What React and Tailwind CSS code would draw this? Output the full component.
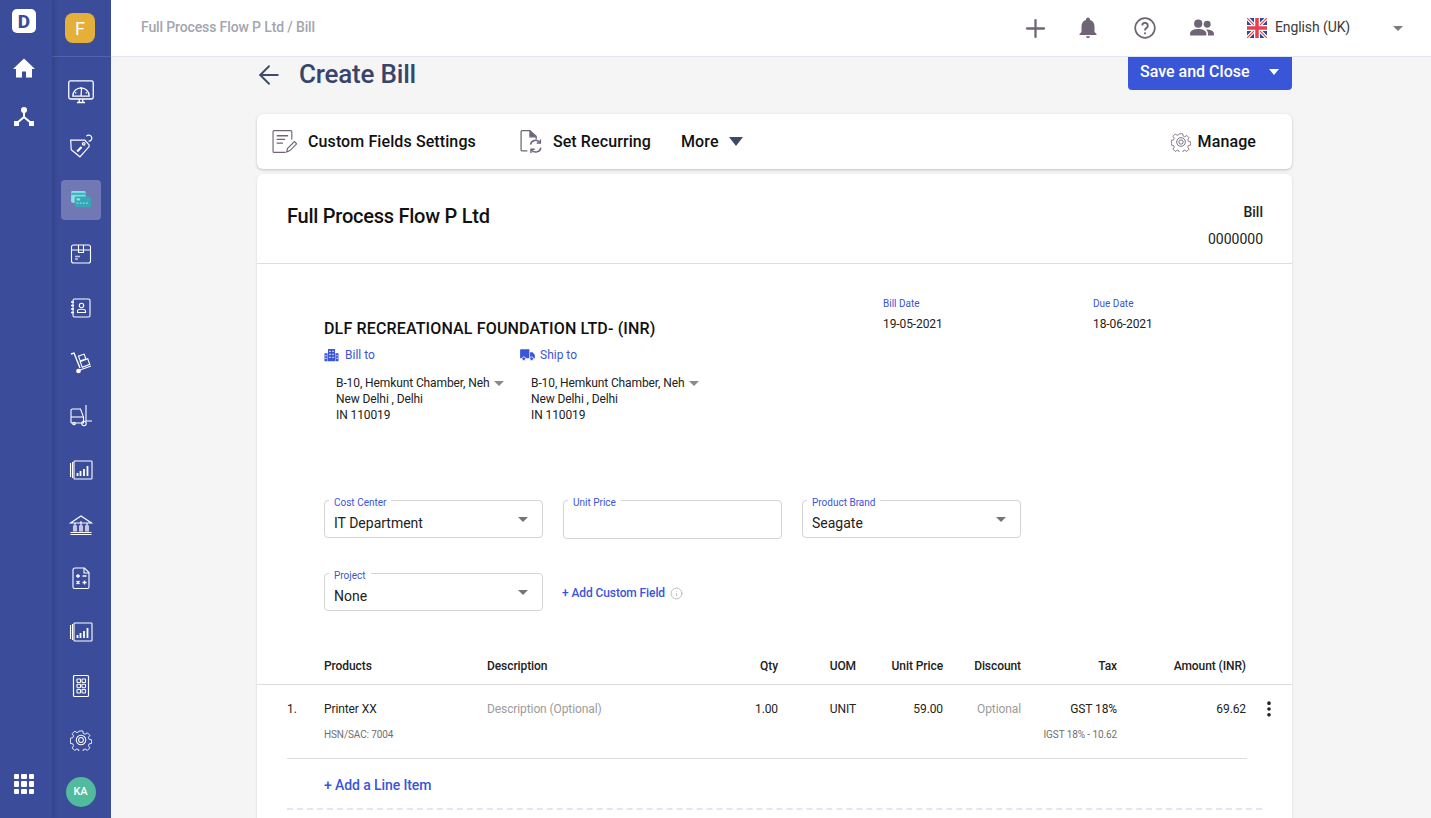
import React from "react";
import { Plus, ArrowLeft, MoreVertical, Info } from "lucide-react";

const Ic = ({ children, className = "", w = "1.100" }) => (
  <svg viewBox="0 0 24 24" fill="none" stroke="currentColor" strokeWidth={w} className={className}>{children}</svg>
);

function Gear({ className = "" }) {
  return (
    <svg viewBox="0 0 24 24" fill="none" stroke="currentColor" strokeWidth="1.100" className={className}>
      <path d="M9.800 1h4.400l.6 3.100 2.200.9 2.700-1.700 3 3-1.700 2.700.9 2.200 3 .6v4.300l-3 .6-.9 2.200 1.700 2.700-3 3-2.700-1.700-2.200.9-.6 3h-4.400l-.6-3-2.200-.9-2.700 1.700-3-3 1.700-2.700-.9-2.200-3-.6V9.800l3-.6.9-2.200-1.700-2.700 3-3 2.700 1.700 2.200-.9z" transform="translate(1.200 1.200) scale(.9)" />
      <circle cx="12" cy="12" r="5.200" />
      <circle cx="12" cy="12" r="2.600" />
    </svg>
  );
}

const Rail = {
  gauge: (
    <Ic className="w-[28px] h-[28px]">
      <rect x="1.500" y="2.500" width="21" height="15.500" rx="1.500" />
      <path d="M5 15.500a7 7 0 0 1 14 0zM12 15.500l.5-6.500M8.500 21h7M10.500 18v3M13.500 18v3" />
      <path d="M7 12.500l1 .5M17 12.500l-1 .5M12 8v1" />
    </Ic>
  ),
  tag: (
    <Ic className="w-[26px] h-[26px]">
      <path d="M2.500 6.500h13l4 4.500v1.500l-8.500 9.500-8-6.500z" />
      <path d="M19 7.500a2.800 2.800 0 1 0-2-4.500" />
      <circle cx="14.500" cy="10" r="1.200" />
      <path d="M8.500 17l4-4" strokeWidth="2" />
    </Ic>
  ),
  card: (
    <svg viewBox="0 0 22 20" style={{ width: 20, height: 18 }}>
      <rect x="0" y="0" width="16" height="13" rx="1.500" fill="#8fdfe4" />
      <rect x="0" y="2" width="16" height="2.500" fill="#3fb6c4" />
      <rect x="4" y="6" width="18" height="12" rx="1.500" fill="#36a7b6" />
      <rect x="6" y="8" width="4" height="2.500" fill="#8fdfe4" />
      <path d="M6 13.500h2M9.500 13.500h2M13 13.500h2M16.500 13.500h2" stroke="#8fdfe4" strokeWidth="1.500" />
    </svg>
  ),
  box: (
    <Ic className="w-[24px] h-[24px]">
      <rect x="2.500" y="3" width="19" height="18" rx="2" />
      <path d="M2.500 8h19M9.500 3v7.500h5V3" />
      <path d="M6 14.500h5M6 17h3" strokeWidth="1.400" opacity=".7" />
    </Ic>
  ),
  contacts: (
    <Ic className="w-[24px] h-[24px]">
      <rect x="4" y="3" width="17" height="18" rx="1.500" />
      <path d="M2 6h3M2 9.500h3M2 13h3M2 16.500h3" strokeWidth="1.500" />
      <circle cx="12.500" cy="9.500" r="2.200" />
      <path d="M8.500 16.500v-1.500c0-1 1.500-1.800 4-1.800s4 .8 4 1.800v1.500z" />
    </Ic>
  ),
  trolley: (
    <Ic className="w-[24px] h-[24px]">
      <path d="M2 4l3-1 6 15" strokeWidth="1.400" />
      <rect x="10" y="5" width="6" height="5" transform="rotate(-20 13 7)" />
      <rect x="12" y="10" width="8" height="6" transform="rotate(-20 16 13)" />
      <path d="M11 20l11-4" />
      <circle cx="9.500" cy="21" r="1.800" fill="currentColor" />
    </Ic>
  ),
  forklift: (
    <Ic className="w-[24px] h-[24px]">
      <path d="M2 19V6.500C2 5.500 2.500 5 3.500 5h8l3 8v6H2" />
      <path d="M17 1v16h6" />
      <path d="M2 13h12.500" />
      <circle cx="5" cy="19.500" r="1.300" />
      <circle cx="15" cy="19.500" r="2.200" />
    </Ic>
  ),
  bars: (
    <Ic className="w-[24px] h-[24px]">
      <rect x="5" y="3" width="18" height="18" rx=".8" />
      <path d="M1.500 5v14M3.500 4v16" />
      <path d="M8.500 18v-3M11.500 18v-5M15 18v-7M18.500 18V8" strokeWidth="1.800" />
    </Ic>
  ),
  bank: (
    <Ic className="w-[24px] h-[24px]">
      <path d="M1.500 11L12 4l10.500 7z" />
      <path d="M1.500 20.500h21M1.500 22.500h21" />
      <rect x="4.500" y="14" width="3" height="5" fill="currentColor" opacity=".7" />
      <rect x="10.500" y="14" width="3" height="5" fill="currentColor" opacity=".7" />
      <rect x="16.500" y="14" width="3" height="5" fill="currentColor" opacity=".7" />
      <path d="M6 11v3M12 9v5M18 11v3" />
    </Ic>
  ),
  calc: (
    <Ic className="w-[24px] h-[24px]">
      <path d="M4 4c0-1 .5-2 2-2h9.500L20 6.500V21c0 1-.5 1.500-1.500 1.500h-13C4.500 22.500 4 22 4 21z" />
      <path d="M15 2v5h5" />
      <path d="M7 10h4M9 8v4M13.500 10h4M7.500 15l3 3M10.500 15l-3 3M13.500 16.500h4M15.500 14.500v4" strokeWidth="1.300" />
    </Ic>
  ),
  grid: (
    <Ic className="w-[24px] h-[24px]">
      <rect x="4.500" y="1.500" width="15" height="21" rx="1" strokeWidth="1.200" />
      <rect x="8" y="5" width="3.500" height="3.500" rx=".6" />
      <rect x="13" y="5" width="3.500" height="3.500" rx=".6" />
      <rect x="8" y="10.200" width="3.500" height="3.500" rx=".6" />
      <rect x="13" y="10.200" width="3.500" height="3.500" rx=".6" />
      <rect x="8" y="15.500" width="3.500" height="3.500" rx=".6" />
      <rect x="13" y="15.500" width="3.500" height="3.500" rx=".6" />
    </Ic>
  ),
  gear: <Gear className="w-[22px] h-[22px]" />,
};

const railItems = ["gauge", "tag", "card", "box", "contacts", "trolley", "forklift", "bars", "bank", "calc", "bars", "grid", "gear"];

function Caret({ className = "" }) {
  return <span className={`inline-block w-0 h-0 border-l-[5px] border-r-[5px] border-t-[5px] border-l-transparent border-r-transparent ${className}`} />;
}

function Flag() {
  return (
    <svg viewBox="0 0 20 20" className="w-[20px] h-[20px] shrink-0 block">
      <rect width="20" height="20" fill="#2a4a94" />
      <path d="M0 0l20 20M20 0L0 20" stroke="#fff" strokeWidth="3.500" />
      <path d="M0 0l20 20M20 0L0 20" stroke="#e8404f" strokeWidth="1.200" />
      <path d="M10 0v20M0 10h20" stroke="#fff" strokeWidth="6" />
      <path d="M10 0v20M0 10h20" stroke="#e8404f" strokeWidth="3.500" />
    </svg>
  );
}

function Field({ label, value, select, className = "" }) {
  return (
    <div className={`relative w-[219px] border border-[#d4d4d4] rounded-[4px] ${className}`}>
      <span className="absolute left-[4px] -top-[4px] bg-white px-[5px] text-[10px] leading-[11px] text-[#3b55d9]">{label}</span>
      <div className="pl-[9px] pt-[14px] text-[14px] leading-[16px] text-[#222]">{value}&nbsp;</div>
      {select && <Caret className="absolute right-[14px] top-[16px] border-t-[#757575]" />}
    </div>
  );
}

function Address({ icon, title }) {
  return (
    <div className="w-[195px]">
      <div className="flex items-center h-[14px] text-[12px] text-[#3b55d9]">
        {icon}
        <span className="ml-[6px]">{title}</span>
      </div>
      <div className="mt-[13px] pl-[12px] text-[12px] leading-[16px] tracking-[-0.1px] text-[#222]">
        <div className="flex items-center">
          <span className="w-[154px] overflow-hidden whitespace-nowrap">B-10, Hemkunt Chamber, Nehru Place</span>
          <Caret className="border-t-[#8a8a8a] ml-[4px]" />
        </div>
        <div>New Delhi , Delhi</div>
        <div>IN 110019</div>
      </div>
    </div>
  );
}

const BuildingIcon = (
  <svg viewBox="0 0 16 16" className="w-[15px] h-[14px]" fill="#3b55d9">
    <path d="M4 1h8v14H4zM0 6h3.500v9H0zM12.500 6H16v9h-3.500z" />
    <path d="M5.500 3h1.500v1.500H5.500zM9 3h1.500v1.500H9zM5.500 6.500h1.500V8H5.500zM9 6.500h1.500V8H9zM5.500 10h1.500v1.500H5.500zM9 10h1.500v1.500H9zM1 8h1.200v1.500H1zM1 11h1.200v1.500H1zM13.800 8H15v1.500h-1.200zM13.800 11H15v1.500h-1.200z" fill="#fff" />
  </svg>
);
const TruckIcon = (
  <svg viewBox="0 0 16 13" className="w-[15px] h-[12px] ml-[1px] -mr-[1px]" fill="#3b55d9">
    <path d="M0 1.500C0 .8.500.300 1.200.300H10v9.700H0z" />
    <path d="M10.800 3.500h2.700L16 6.500V10h-5.200z" />
    <circle cx="4" cy="10.500" r="2" stroke="#fff" strokeWidth=".8" />
    <circle cx="12.500" cy="10.500" r="2" stroke="#fff" strokeWidth=".8" />
  </svg>
);

const gridCols = "grid grid-cols-[37px_163px_220px_71px_78px_87px_78px_96px_129px]";

export default function App() {
  return (
    <div className="flex h-[818px] w-full overflow-hidden bg-[#f5f5f5] text-[#222] font-['Roboto',sans-serif]">
      <aside className="relative z-10 w-[52px] shrink-0 bg-[#3a4c9a] pr-[4px] flex flex-col items-center text-white shadow-[2px_0_4px_rgba(0,0,0,0.12)]">
        <div className="mt-[9px] w-[24px] h-[24px] bg-white rounded-[5px] flex items-center justify-center text-[#3a4c9a] text-[19px] leading-none font-extrabold">D</div>
        <svg viewBox="0 0 24 24" className="mt-[23px] w-[24px] h-[24px]" fill="currentColor">
          <path d="M12 2.500L1 13h3v8.500h6v-6h4v6h6V13h3z" />
        </svg>
        <svg viewBox="0 0 24 24" className="mt-[25px] w-[24px] h-[24px]" fill="currentColor" stroke="currentColor">
          <circle cx="12" cy="5" r="3" stroke="none" />
          <rect x="2" y="16" width="5" height="5" stroke="none" />
          <rect x="17" y="16" width="5" height="5" stroke="none" />
          <path d="M12 7v5M12 12l-7 6M12 12l7 6" strokeWidth="2" fill="none" />
        </svg>
        <div className="mt-auto mb-[24px] grid grid-cols-3 gap-[2px]">
          {Array.from({ length: 9 }).map((_, i) => (
            <span key={i} className="w-[5.500px] h-[5.500px] bg-white rounded-[1px]" />
          ))}
        </div>
      </aside>

      <nav className="w-[59px] shrink-0 bg-[#3a4c9a] flex flex-col items-center text-white">
        <div className="w-full h-[57px] border-b border-[#5264ac] pr-[3px] flex items-center justify-center shrink-0">
          <div className="w-[30px] h-[30px] rounded-[8px] bg-[#e5b03a] flex items-center justify-center text-[18px] text-white">F</div>
        </div>
        <div className="flex flex-col items-center pr-[1px]">
          {railItems.map((k, i) => (
            <div
              key={i}
              className={`w-[40px] h-[40px] flex items-center justify-center ${i === 0 ? "mt-[15px]" : "mt-[14px]"} ${k === "card" ? "bg-[#7079b3] rounded-[4px]" : ""}`}
            >
              {Rail[k]}
            </div>
          ))}
        </div>
        <div className="mt-[17px] mr-[2px] w-[30px] h-[30px] rounded-full bg-[#52bb9d] flex items-center justify-center text-[11px] font-medium">KA</div>
      </nav>

      <div className="flex-1 min-w-0 flex flex-col">
        <header className="h-[57px] shrink-0 bg-white border-b border-[#e2e5f0] flex items-center pl-[30px] pr-[28px]">
          <span className="pb-[1px] text-[14px] font-medium text-[#a2a6ae] tracking-[-0.13px]">Full Process Flow P Ltd / Bill</span>
          <div className="ml-auto flex items-center text-[#6f6577]">
            <Plus className="w-[29px] h-[29px]" strokeWidth={1.9} />
            <svg viewBox="0 0 24 24" className="ml-[26.500px] w-[24px] h-[24px]" fill="currentColor">
              <path d="M12 22c1.200 0 2-.8 2-1.800h-4c0 1 .8 1.800 2 1.800zM18.500 16v-5.500c0-3.200-1.700-5.800-4.500-6.500V3.500a2 2 0 0 0-4 0V4C7.200 4.700 5.500 7.300 5.500 10.500V16L3.500 18v1h17v-1z" />
            </svg>
            <svg viewBox="0 0 24 24" className="ml-[33px] w-[24px] h-[24px]" fill="none" stroke="currentColor" strokeWidth="1.700">
              <circle cx="12" cy="12" r="9.800" />
              <path d="M9.200 9.500a2.800 2.800 0 1 1 4.300 2.400c-1 .7-1.500 1.200-1.500 2.600" strokeWidth="1.900" />
              <circle cx="12" cy="17.300" r="1.100" fill="currentColor" stroke="none" />
            </svg>
            <svg viewBox="0 0 24 24" className="ml-[32px] w-[26px] h-[26px]" fill="currentColor">
              <circle cx="8.500" cy="8" r="3.800" />
              <circle cx="16.800" cy="8.500" r="3.200" />
              <path d="M1 19v-2c0-2.800 4-4 7.500-4s7.500 1.200 7.500 4v2zM17.500 19v-2c0-1.500-.7-2.700-1.900-3.600 3-.2 7.400 1 7.400 3.600v2z" />
            </svg>
            <span className="ml-[32px]"><Flag /></span>
            <span className="ml-[8px] w-[118px] pb-[1px] text-[14px] tracking-[-0.1px] text-[#3a3a3a]">English (UK)</span>
            <Caret className="border-t-[#7b7b7b] border-l-[5.500px] border-r-[5.500px] border-t-[5.500px]" />
          </div>
        </header>

        <main className="pl-[146px] pr-[139px]">
          <div className="flex items-start h-[57px]">
            <ArrowLeft className="mt-[3px] -ml-[3px] w-[30px] h-[30px] text-[#3d4a6b]" strokeWidth={1.5} />
            <h1 className="ml-[15px] mt-[1px] text-[26px] leading-[32px] tracking-[-0.2px] font-medium text-[#38456b]">Create Bill</h1>
            <button className="ml-auto w-[164px] h-[33px] rounded-b-[4px] bg-[#3a56d8] text-white text-[16px] font-medium flex items-center pl-[12px] pb-[3px]">
              <span>Save and Close</span>
              <Caret className="ml-[19px] border-t-white border-l-[5.500px] border-r-[5.500px] border-t-[6px]" />
            </button>
          </div>

          <div className="h-[55px] bg-white rounded-[6px] shadow-[0_1px_3px_rgba(0,0,0,0.22)] flex items-center pl-[15px] pr-[36px] text-[16px] tracking-[0.1px] font-medium text-[#111]">
            <svg viewBox="0 0 24 24" className="w-[25px] h-[25px] text-[#6f6577]" fill="none" stroke="currentColor" strokeWidth="1.100">
              <path d="M19 10V2.500c0-.6-.4-1-1-1H2c-.6 0-1 .4-1 1V21.500c0 .6.400 1 1 1h11" />
              <path d="M4.500 6.500h11M4.500 10h8M4.500 13.500h6" strokeWidth="1.300" />
              <path d="M14 22l1-3.500L21.500 12l2.200 2.200-6.500 6.500z" />
            </svg>
            <span className="ml-[11px]">Custom Fields Settings</span>
            <svg viewBox="0 0 24 24" className="ml-[43px] w-[25px] h-[25px] text-[#6f6577]" fill="none" stroke="currentColor" strokeWidth="1.200">
              <path d="M8 21H3c-.6 0-1-.4-1-1V2.500c0-.6.400-1 1-1h7.500L16.500 7v3" />
              <path d="M10.500 2v5.500h6" fill="currentColor" />
              <path d="M11 15a5 5 0 0 1 9-2M21 18a5 5 0 0 1-9 2" strokeWidth="1.400" />
              <path d="M20.500 10v3.500H17M11.500 23v-3.500H15" strokeWidth="1.400" />
            </svg>
            <span className="ml-[9px]">Set Recurring</span>
            <span className="ml-[30px]">More</span>
            <Caret className="ml-[10px] border-t-[#3d4a6b] border-l-[7.500px] border-r-[7.500px] border-t-[9px]" />
            <span className="ml-auto text-[#6f6577]"><Gear className="w-[20px] h-[20px] block" /></span>
            <span className="ml-[7px]">Manage</span>
          </div>

          <div className="mt-[5px] bg-white rounded-t-[6px] h-[700px] shadow-[0_1px_3px_rgba(0,0,0,0.12)]">
            <div className="h-[90px] border-b border-[#dedede] flex items-start justify-between pl-[30px] pr-[29px]">
              <div className="mt-[30px] text-[20px] leading-[24px] tracking-[-0.25px] font-medium text-[#111]">Full Process Flow P Ltd</div>
              <div className="text-right text-[14px] leading-[27px] mt-[25px] text-[#222]">
                <div className="font-medium">Bill</div>
                <div>0000000</div>
              </div>
            </div>

            <div className="relative h-[236px] pl-[67px]">
              <div className="pt-[55px] text-[16px] leading-[19px] tracking-[0.15px] font-medium text-[#111]">DLF RECREATIONAL FOUNDATION LTD- (INR)</div>
              <div className="mt-[10px] flex">
                <Address icon={BuildingIcon} title="Bill to" />
                <Address icon={TruckIcon} title="Ship to" />
              </div>
              <div className="absolute left-[626px] top-[33px] text-[10px] leading-[14px] text-[#3b55d9]">Bill Date</div>
              <div className="absolute left-[626px] top-[53px] text-[12px] leading-[14px] tracking-[-0.1px] text-[#222]">19-05-2021</div>
              <div className="absolute left-[836px] top-[33px] text-[10px] leading-[14px] text-[#3b55d9]">Due Date</div>
              <div className="absolute left-[836px] top-[53px] text-[12px] leading-[14px] tracking-[-0.1px] text-[#222]">18-06-2021</div>
            </div>

            <div className="pl-[67px]">
              <div className="flex gap-[20px]">
                <Field label="Cost Center" value="IT Department" select className="h-[38px]" />
                <Field label="Unit Price" value="" className="h-[39px]" />
                <Field label="Product Brand" value="Seagate" select className="h-[38px]" />
              </div>
              <div className="mt-[34px] flex items-center">
                <Field label="Project" value="None" select className="h-[38px]" />
                <span className="ml-[19px] mt-[2px] text-[12px] tracking-[-0.1px] font-medium text-[#3b55d9]">+ Add Custom Field</span>
                <Info className="ml-[5px] mt-[2px] w-[13px] h-[13px] text-[#a8a8a8]" strokeWidth={1.4} />
              </div>
            </div>

            <div className={`${gridCols} pl-[30px] mt-[48px] h-[26px] border-b border-[#dedede] text-[12px] leading-[14px] tracking-[-0.08px] font-medium text-[#222]`}>
              <span />
              <span>Products</span>
              <span>Description</span>
              <span className="text-right">Qty</span>
              <span className="text-right">UOM</span>
              <span className="text-right">Unit Price</span>
              <span className="text-right">Discount</span>
              <span className="text-right">Tax</span>
              <span className="text-right">Amount (INR)</span>
            </div>

            <div className="relative ml-[30px] mr-[45px] h-[74px] border-b border-[#dedede]">
              <div className={`${gridCols} pt-[17px] text-[12px] leading-[14px] tracking-[-0.1px] text-[#222]`}>
                <span>1.</span>
                <span>Printer XX</span>
                <span className="text-[#9b9b9b]">Description (Optional)</span>
                <span className="text-right">1.00</span>
                <span className="text-right">UNIT</span>
                <span className="text-right">59.00</span>
                <span className="text-right text-[#9b9b9b]">Optional</span>
                <span className="text-right">GST 18%</span>
                <span className="text-right">69.62</span>
                <span className="col-start-2 mt-[13px] text-[10px] leading-[12px] text-[#6f6f6f]">HSN/SAC: 7004</span>
                <span className="col-start-8 mt-[13px] text-[10px] leading-[12px] text-[#6f6f6f] text-right whitespace-nowrap">IGST 18% - 10.62</span>
              </div>
              <MoreVertical className="absolute left-[972px] top-[14px] w-[20px] h-[20px] text-[#222]" strokeWidth={2.4} />
            </div>

            <div className="pl-[67px] pt-[18px] text-[14px] leading-[16px] tracking-[-0.1px] font-medium text-[#3b55d9]">+ Add a Line Item</div>
            <div className="mx-[30px] mt-[15px] border-t-2 border-dashed border-[#e3e5f2]" />
          </div>
        </main>
      </div>
    </div>
  );
}
